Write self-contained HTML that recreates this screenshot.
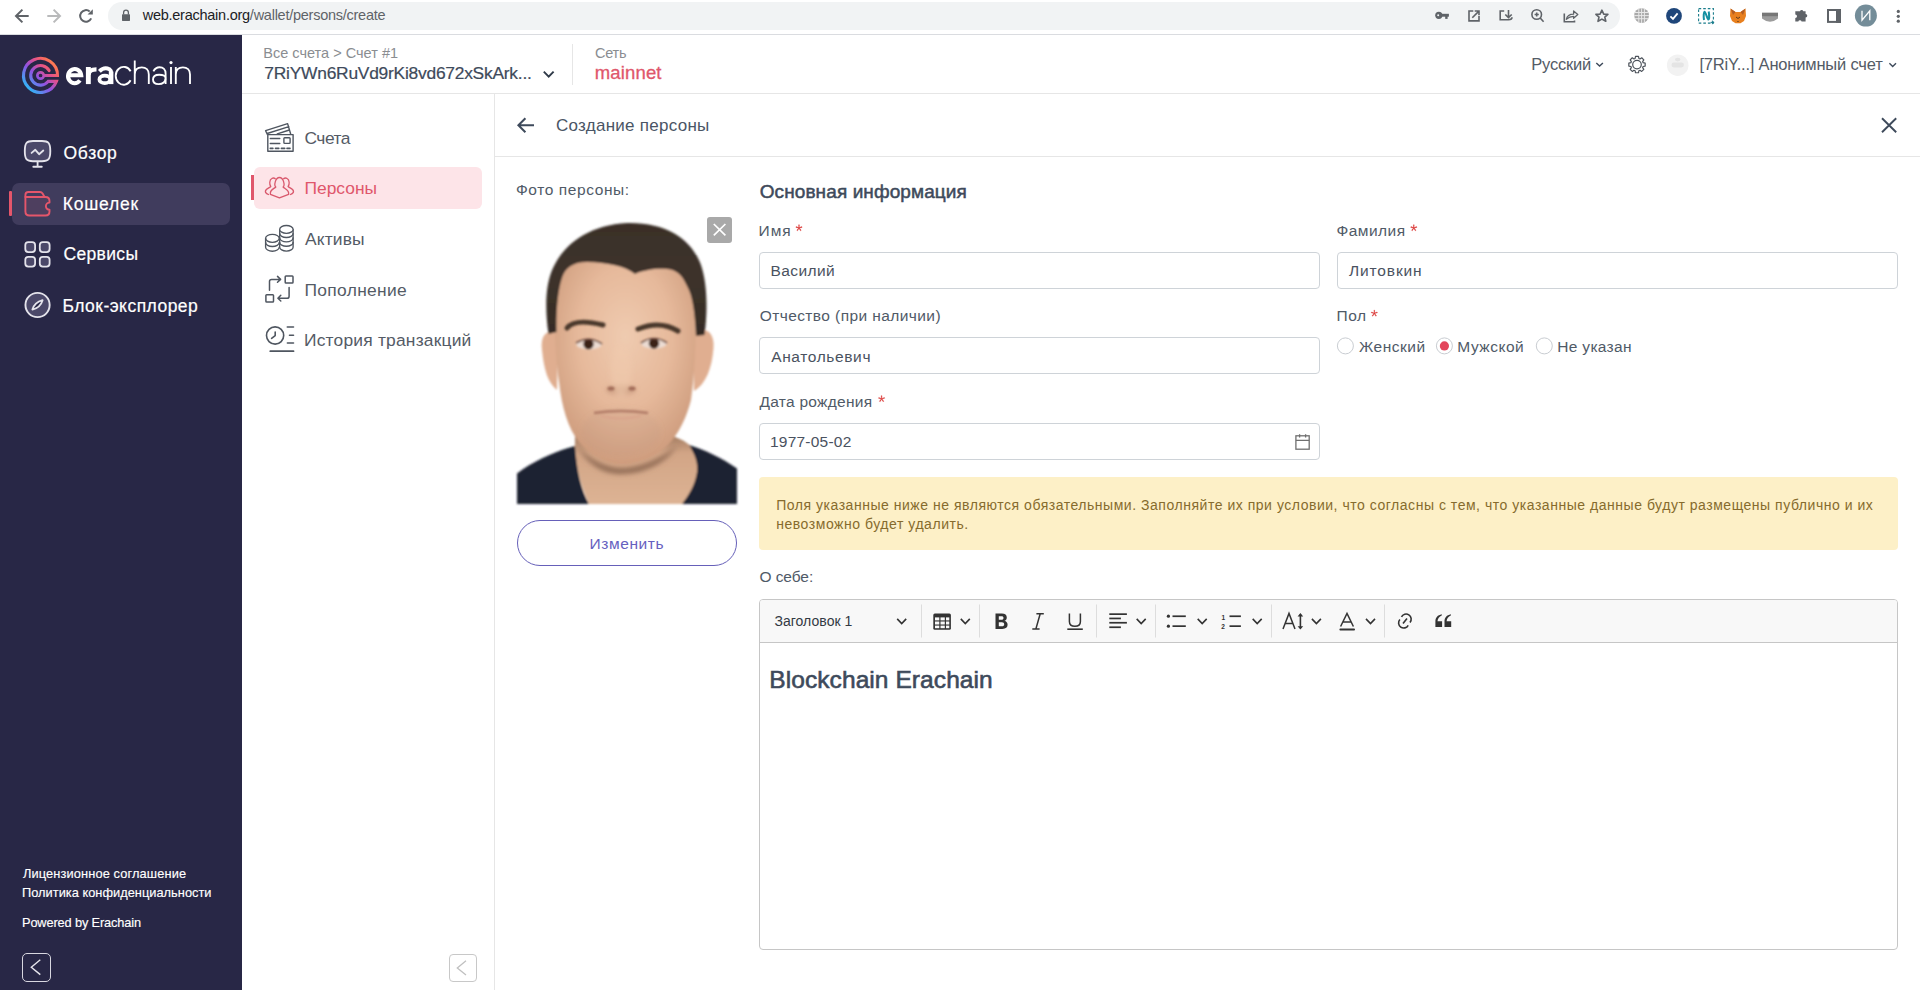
<!DOCTYPE html>
<html lang="ru"><head><meta charset="utf-8"><title>Erachain</title>
<style>
html,body{margin:0;padding:0;width:1920px;height:990px;overflow:hidden;background:#fff;position:relative;font-family:"Liberation Sans",sans-serif}
.a{position:absolute;box-sizing:border-box}
.t{position:absolute;white-space:pre;line-height:1;font-family:"Liberation Sans",sans-serif}
svg.a{overflow:visible}
</style></head><body>
<!-- browser chrome -->
<div class="a" style="left:0;top:0;width:1920px;height:34px;background:#fff"></div>
<div class="a" style="left:0;top:34px;width:1920px;height:1px;background:#dadce0"></div>
<div class="a" style="left:108px;top:2px;width:1512px;height:28px;border-radius:14px;background:#f1f3f4"></div>
<!-- sidebar -->
<div class="a" style="left:0;top:35px;width:242px;height:955px;background:#282746"></div>
<div class="a" style="left:12px;top:183px;width:218px;height:42px;border-radius:7px;background:#403c5d"></div>
<div class="a" style="left:9px;top:191px;width:3px;height:25px;background:#e5566b;border-radius:1px"></div>
<!-- header -->
<div class="a" style="left:242px;top:93px;width:1678px;height:1px;background:#e6e6e6"></div>
<div class="a" style="left:572px;top:44px;width:1px;height:41px;background:#e6e6e6"></div>
<!-- sub sidebar -->
<div class="a" style="left:494px;top:94px;width:1px;height:896px;background:#e6e6e6"></div>
<div class="a" style="left:254px;top:167px;width:228px;height:42px;border-radius:6px;background:#fde4e8"></div>
<div class="a" style="left:251px;top:175px;width:3px;height:25px;background:#e0566b"></div>
<!-- content header -->
<div class="a" style="left:495px;top:156px;width:1425px;height:1px;background:#e6e6e6"></div>
<!-- inputs -->
<div class="a" style="left:759px;top:252px;width:561px;height:37px;border:1px solid #ced3d8;border-radius:4px"></div>
<div class="a" style="left:1337px;top:252px;width:561px;height:37px;border:1px solid #ced3d8;border-radius:4px"></div>
<div class="a" style="left:759px;top:337px;width:561px;height:37px;border:1px solid #ced3d8;border-radius:4px"></div>
<div class="a" style="left:759px;top:423px;width:561px;height:37px;border:1px solid #ced3d8;border-radius:4px"></div>
<!-- warning -->
<div class="a" style="left:759px;top:477px;width:1139px;height:73px;border-radius:4px;background:#fdf0c7"></div>
<!-- editor -->
<div class="a" style="left:759px;top:599px;width:1139px;height:351px;border:1px solid #c6c6c6;border-radius:4px;background:#fff"></div>
<div class="a" style="left:760px;top:600px;width:1137px;height:42px;background:#f8f8f8;border-radius:3px 3px 0 0"></div>
<div class="a" style="left:760px;top:642px;width:1137px;height:1px;background:#c6c6c6"></div>
<!-- button -->
<div class="a" style="left:517px;top:520px;width:220px;height:46px;border:1px solid #6660b9;border-radius:23px"></div>

<!-- photo -->
<svg class="a" style="left:517px;top:210px" width="220" height="294" viewBox="0 0 220 294">
<defs>
<radialGradient id="fg" cx="0.5" cy="0.4" r="0.6">
<stop offset="0" stop-color="#efcbb0"/><stop offset="0.55" stop-color="#e6b99b"/><stop offset="1" stop-color="#cf9d7e"/></radialGradient>
<linearGradient id="ng" x1="0" y1="0" x2="0" y2="1"><stop offset="0" stop-color="#a47d62"/><stop offset="0.25" stop-color="#d2a586"/><stop offset="1" stop-color="#ddb394"/></linearGradient>
<linearGradient id="hg" x1="0" y1="0" x2="0" y2="1"><stop offset="0" stop-color="#3a2f28"/><stop offset="0.5" stop-color="#3d332b"/><stop offset="1" stop-color="#352b24"/></linearGradient>
<filter id="bl" x="-20%" y="-20%" width="140%" height="140%"><feGaussianBlur stdDeviation="0.8"/></filter>
<filter id="bl2" x="-50%" y="-50%" width="200%" height="200%"><feGaussianBlur stdDeviation="2.5"/></filter>
</defs>
<g filter="url(#bl)">
<path d="M58 226 C57 250 62 272 72 294 L174 294 C180 276 184 262 181 246 C177 238 170 231 158 227 Z" fill="url(#ng)"/>
<path d="M0 263.5 C15 252 35 243 51 238 L58 236 C60 262 64 280 72 294 L0 294 Z" fill="#1b2230"/>
<path d="M220 258.5 C205 248 188 240 172 235 C178 245 181 252 180 262 C178 275 172 285 165 294 L220 294 Z" fill="#1b2230"/>
<path d="M41 124 C31 118 23 124 25 140 C27 160 31 173 40 180 Z" fill="#e0ae90"/>
<path d="M176 121 C187 116 198 121 196.5 138 C195 158 189 174 177 181 Z" fill="#e0ae90"/>
<path d="M40 72 C40 55 62 42 104 42 C150 42 176 55 178 72 C180 120 178 165 174 190 C170 206 162 224 150 236 C138 247 120 254.5 104 254.5 C91 254.5 74 246 62 232 C51 218 45 198 42 172 C38 140 36 100 40 72 Z" fill="url(#fg)"/>
<path d="M31.5 124 C28 100 28 75 36 58 C46 36 70 15 110 13 C150 12 175 30 184 55 C190 72 191 100 187.5 125 L179 126 C178 105 176 86 170 76 C165 65 160 60 150 59 C140 58 126 60 118 64 C108 56 90 52.5 70 52 C56 52 48 58 45 68 C41 80 39 100 39.5 122 Z" fill="url(#hg)"/>
</g>
<g filter="url(#bl2)">
<path d="M60 236 C75 252 92 258 104 258 C122 258 142 250 160 236 C150 252 128 264 104 264 C86 264 70 254 60 236 Z" fill="#8a6550" opacity="0.9"/>
<ellipse cx="104" cy="222" rx="40" ry="24" fill="#b3927d" opacity="0.15"/>
<ellipse cx="104" cy="180" rx="15" ry="5" fill="#b07c62" opacity="0.45"/>
<ellipse cx="104" cy="160" rx="10" ry="26" fill="#f0c9ad" opacity="0.6"/>
</g>
<g filter="url(#bl)">
<path d="M50 118 Q58 108 86 115" fill="none" stroke="#4a372b" stroke-width="5" stroke-linecap="round"/>
<path d="M121 119 Q143 110 161 121" fill="none" stroke="#4a372b" stroke-width="5" stroke-linecap="round"/>
<ellipse cx="72" cy="134.5" rx="12.5" ry="5" fill="#ecdcd3"/>
<ellipse cx="137" cy="133.8" rx="12.5" ry="5" fill="#ecdcd3"/>
<circle cx="71.5" cy="134" r="5.2" fill="#3a2016"/>
<circle cx="137" cy="133.3" r="5.2" fill="#3a2016"/>
<path d="M59 133 Q72 125 85 134" fill="none" stroke="#6e4a3c" stroke-width="1.6"/>
<path d="M124 133 Q137 124 150 133" fill="none" stroke="#6e4a3c" stroke-width="1.6"/>
<ellipse cx="94" cy="178.5" rx="3.5" ry="2" fill="#a06b56"/>
<ellipse cx="115" cy="178.5" rx="3.5" ry="2" fill="#a06b56"/>
<path d="M77 203 Q104 199 131 203" fill="none" stroke="#b07a66" stroke-width="2.4"/>
<path d="M84 206 Q104 211 124 206" fill="none" stroke="#d9a48c" stroke-width="2"/>
</g>
</svg>
<!-- photo close -->
<div class="a" style="left:707px;top:217px;width:25px;height:25.5px;border-radius:3px;background:#a9a9a9"></div>
<svg class="a" style="left:707px;top:217px" width="25" height="26" viewBox="0 0 25 26"><path d="M6.8 7 L18.4 18.4 M18.4 7 L6.8 18.4" stroke="#fff" stroke-width="1.7"/></svg>
<!-- logo -->
<svg class="a" style="left:0;top:0" width="242" height="120" viewBox="0 0 242 120">
<defs><linearGradient id="lg" gradientUnits="userSpaceOnUse" x1="27" y1="89" x2="54" y2="62">
<stop offset="0" stop-color="#2dbaf7"/><stop offset="0.42" stop-color="#8f52e3"/><stop offset="0.68" stop-color="#e0508f"/><stop offset="0.88" stop-color="#fa6a5c"/><stop offset="1" stop-color="#ff8250"/></linearGradient></defs>
<g fill="none" stroke="url(#lg)" stroke-width="3.1" stroke-linecap="round">
<path d="M44.8 75.5 L57.5 75.5 A17 17 0 1 0 56.4 81.4 L48.2 81.4 A9.8 9.8 0 1 1 49.1 70.6"/>
<circle cx="40.56" cy="75.5" r="3.2" stroke-width="2.7"/>
</g>
</svg>
<!-- sidebar icons -->
<svg class="a" style="left:0;top:130px" width="60" height="200" viewBox="0 130 60 200">
<g fill="none" stroke="#e4e3eb" stroke-width="1.85" stroke-linecap="round" stroke-linejoin="round">
<path d="M33 141 H42 C48.5 141 50.3 143 50.3 151 C50.3 159.2 48.5 161.2 42 161.2 H33 C26.5 161.2 24.8 159.2 24.8 151 C24.8 143 26.5 141 33 141 Z" fill="#4b4869"/>
<path d="M31.6 152.9 L35.3 149.8 L39.1 154.2 L43.3 150.5"/>
<path d="M37.6 162 V166.5 M33.3 166.7 H41.8"/>
<g stroke="#e5566b" stroke-width="1.9" fill="#4e3f5f">
<path d="M25.4 197 V211.5 Q25.4 215.5 29.4 215.5 H45.5 Q49.5 215.5 49.5 211.5 V209.8 A3.6 3.6 0 0 1 49.5 202.6 V201 Q49.5 197 45.5 197 Z"/>
<path d="M25.4 197 V195 Q25.4 192 28.4 192 H40 Q41.6 192 42.6 193.6 L44.6 197" fill="none"/>
</g>
<g fill="#4b4869" stroke-width="1.8">
<rect x="25.3" y="242.1" width="9.8" height="10" rx="3"/>
<rect x="39.8" y="242.1" width="9.8" height="10" rx="3"/>
<rect x="25.3" y="256.8" width="9.8" height="9.8" rx="3"/>
<rect x="39.8" y="256.8" width="9.8" height="9.8" rx="3"/>
<circle cx="37.55" cy="305" r="12.1" stroke-width="1.9"/>
</g>
<path d="M32.4 309.6 Q34.5 302.5 42.6 300.2 Q40.5 307.5 32.4 309.6 Z" stroke-width="1.8" fill="#282746"/>
</g>
</svg>
<!-- sub sidebar icons -->
<svg class="a" style="left:255px;top:115px" width="50" height="245" viewBox="255 115 50 245">
<g fill="none" stroke="#4f5660" stroke-width="1.4" stroke-linecap="round" stroke-linejoin="round">
<path d="M267.5 134.6 L265.6 130.6 L287.6 123.6 L290.6 133.8 M267.2 133.5 L288.9 126.7 M277.3 133.8 L289.4 130"/>
<rect x="267.8" y="134.6" width="25.3" height="16.6" fill="#fff"/>
<path d="M270.3 138.5 H279.8 M270.3 143.5 H279.8"/>
<rect x="283.9" y="137.8" width="6.2" height="5.6" rx="0.8"/>
<path d="M270.3 148.4 H272.9 M275.5 148.4 H278.8 M281.4 148.4 H284.7 M287 148.4 H290" stroke-width="1.6"/>
<!-- coins -->
<g stroke-width="1.35">
<path d="M279.7 229.4 V247.2 A6.7 3.9 0 0 0 293.1 247.2 V229.4"/>
<ellipse cx="286.4" cy="229.4" rx="6.7" ry="3.9" fill="#fff"/>
<path d="M279.7 233.6 A6.7 3.9 0 0 0 293.1 233.6 M279.7 238 A6.7 3.9 0 0 0 293.1 238 M279.7 242.4 A6.7 3.9 0 0 0 293.1 242.4"/>
<path d="M265.6 238.3 V247.2 A6.8 4 0 0 0 279.2 247.2"/>
<ellipse cx="272.4" cy="238.3" rx="6.8" ry="4"/>
<path d="M265.6 242.5 A6.8 4 0 0 0 279.2 242.5"/>
</g>
<!-- topup -->
<g stroke-width="1.5">
<rect x="285.2" y="275.9" width="7.8" height="7.2" rx="0.8"/>
<rect x="265.9" y="294.8" width="7.6" height="7.2" rx="0.8"/>
<path d="M269.5 290.3 V281.5 Q269.5 279.4 271.6 279.4 H280.5 M277.5 276.4 L280.6 279.4 L277.5 282.3"/>
<path d="M289.1 287.4 V296.2 Q289.1 298.3 287 298.3 H278 M280.8 295.3 L277.9 298.3 L280.8 301"/>
</g>
<!-- history -->
<g stroke-width="1.6">
<circle cx="275.1" cy="335.5" r="8.6"/>
<path d="M275.2 332 V335.6 L271.6 338.3"/>
<path d="M287.3 327 H293.5 M289.5 335.2 H293.5 M287.4 343 H293.5"/>
<path d="M270.3 351.2 H293.5" stroke-width="1.8"/>
</g>
</g>
<g fill="none" stroke="#d9596d" stroke-width="1.3" stroke-linejoin="round" stroke-linecap="round">
<path d="M275.8 187 C273.8 185.5 275.3 177.5 279.45 177.5 C283.6 177.5 285.1 185.5 283.1 187 C284.5 188.6 288.6 189.5 288.6 192.8 V194.3 L279.45 197.8 L270.4 194.3 V192.8 C270.4 189.5 274.4 188.6 275.8 187 Z"/>
<path d="M275.2 178.6 C274 177.8 272.7 178 271.8 178.5 C269.3 179.7 269.2 184.8 270.8 186.5 C269.3 188 265.4 188.6 265.4 191.5 C265.4 193.2 267 194 268.5 194.5"/>
<path d="M283.7 178.6 C284.9 177.8 286.2 178 287.1 178.5 C289.6 179.7 289.7 184.8 288.1 186.5 C289.6 188 293.5 188.6 293.5 191.5 C293.5 193.2 291.9 194 290.4 194.5"/>
</g>
</svg>
<!-- logo text -->
<svg class="a" style="left:60px;top:55px" width="140" height="35" viewBox="60 55 140 35">
<g fill="none" stroke="#fff" stroke-linecap="butt">
<path d="M68.2 75.3 H81.2 A6.6 7.1 0 1 0 79.9 80.4" stroke-width="4.1"/>
<path d="M88.35 67 V84.1" stroke-width="4.9"/>
<path d="M88.4 75 Q88.6 69.4 96.5 69.4" stroke-width="4.4"/>
<path d="M111.1 71.5 V84.1" stroke-width="4.6"/>
<path d="M99.4 71.4 Q104 66.6 109.4 69.2 Q111.1 70.3 111.1 73" stroke-width="3.9"/>
<ellipse cx="104.8" cy="79.4" rx="5.4" ry="3.7" stroke-width="3.8"/>
<g stroke-width="1.85">
<path d="M130.6 71.3 A8 8.9 0 1 0 130.6 80.3"/>
<path d="M134.75 60.6 V83.9 M134.75 74.5 C134.75 70 137.5 67.3 141.8 67.3 C146 67.3 148.8 70 148.8 74.5 V83.9"/>
<path d="M153.4 71.3 C154.8 68.5 157 67.2 159.6 67.2 C163.2 67.2 165.6 69.8 165.6 73.5 V83.9"/>
<path d="M165.6 77.6 C165.2 75.6 162.4 74.7 159.2 74.7 C155.3 74.7 153 76.7 153 79.5 C153 82.3 155.3 84.1 158.8 84.1 C162.8 84.1 165.6 81.6 165.6 78.4"/>
<path d="M171 67 V83.9"/>
<path d="M175.8 67 V83.9 M175.8 74.5 C175.8 70 178.6 67.3 182.9 67.3 C187.2 67.3 190 70 190 74.5 V83.9"/>
</g>
</g>
<circle cx="171" cy="62.6" r="1.6" fill="#fff"/>
</svg>
<!-- browser icons -->
<svg class="a" style="left:0;top:0" width="140" height="34" viewBox="0 0 140 34">
<g fill="none" stroke-width="2" stroke-linecap="butt" stroke-linejoin="miter">
<path d="M28.7 16 H16.5 M22.4 9.6 L16 16 L22.4 22.4" stroke="#5f6368"/>
<path d="M47.3 16 H59.5 M53.6 9.6 L60 16 L53.6 22.4" stroke="#b9babb"/>
<path d="M91.2 18.4 A5.8 5.8 0 1 1 89.7 11.5" stroke="#5f6368"/>
</g>
<polygon points="87.6,14.4 92.8,14.4 92.8,9.2" fill="#5f6368"/>
<rect x="122" y="14.3" width="8" height="6.6" rx="0.6" fill="#5f6368"/>
<path d="M123.6 14.5 V12.6 A2.4 2.4 0 0 1 128.4 12.6 V14.5" fill="none" stroke="#5f6368" stroke-width="1.3"/>
</svg>
<svg class="a" style="left:1420px;top:0" width="500" height="34" viewBox="1420 0 500 34">
<g fill="#5f6368" stroke="none">
<circle cx="1438.8" cy="15.3" r="3.6"/>
<rect x="1441" y="13.8" width="7.9" height="2.9"/>
<rect x="1445.2" y="15" width="2.4" height="3.9"/>
</g>
<circle cx="1438.2" cy="15.3" r="1" fill="#f1f3f4"/>
<g fill="none" stroke="#5f6368" stroke-width="1.6">
<path d="M1473.3 11 H1469 V20.9 H1479 V16"/>
<path d="M1472.3 17.7 L1478.9 11.1 M1474.7 11 H1479 V15.2"/>
<path d="M1504.2 11 H1500.2 V19.7 H1508.5 Q1512 19.7 1512 17.3"/>
<path d="M1508.5 10 V17.5 M1505.3 14.5 L1508.5 17.6 L1511.7 14.5"/>
<circle cx="1536.7" cy="14.5" r="4.8"/>
<path d="M1534.6 14.5 H1538.8 M1536.7 12.4 V16.6 M1540.2 18 L1543.6 21.7"/>
<path d="M1564.3 13.4 V21.7 H1574.5 V20.4"/>
<path d="M1566.3 19.3 C1567 16 1569.5 14.2 1573.6 14.2 V11 L1577.8 14.6 L1573.6 18.3 V16.3 C1570.5 16.3 1568.5 17.3 1566.3 19.3 Z" stroke-width="1.3" stroke-linejoin="round"/>
<path d="M1601.9 10.2 L1603.7 14.1 L1607.9 14.4 L1604.8 17.1 L1605.8 21.3 L1601.9 19.1 L1598 21.3 L1599 17.1 L1595.9 14.4 L1600.1 14.1 Z" stroke-linejoin="round"/>
</g>
<!-- extensions -->
<circle cx="1641.6" cy="15.6" r="7.4" fill="#a9a9a9"/>
<g stroke="#e8e8e8" stroke-width="1" fill="none">
<path d="M1634.5 12.5 H1648.7 M1634.2 15.6 H1649 M1634.5 18.7 H1648.7 M1638.8 8.5 V22.7 M1641.6 8.2 V23 M1644.4 8.5 V22.7"/>
</g>
<circle cx="1674" cy="15.9" r="7.9" fill="#1f467a"/>
<path d="M1670.4 16.3 L1673 18.9 L1677.6 13.4" fill="none" stroke="#fff" stroke-width="1.8"/>
<rect x="1698.6" y="8.6" width="14.8" height="14.5" fill="none" stroke="#1b7d8c" stroke-width="1.1" stroke-dasharray="2.6 2"/>
<path d="M1704 20 C1703.3 16 1703.8 12 1704.6 11.8 C1705.6 11.6 1707.5 19.8 1708.4 19.6 C1709.2 19.4 1709.4 15.5 1708.7 11.5" fill="none" stroke="#1690a2" stroke-width="2"/>
<path d="M1712.4 20.6 V24.2 M1710.6 22.4 H1714.2" stroke="#1b7d8c" stroke-width="1"/>
<path d="M1730.5 8.6 L1735.5 12 H1740.5 L1745.5 8.6 L1746 16 L1744 21 L1740.5 23.3 H1735.5 L1732 21 L1730 16 Z" fill="#e8801f"/>
<path d="M1730.5 8.6 L1735.5 12 L1733 15 Z M1745.5 8.6 L1740.5 12 L1743 15 Z" fill="#b55d22"/>
<path d="M1736 17 L1738 18.5 L1740 17 M1737.4 21.5 H1738.6" stroke="#5a3a20" stroke-width="1" fill="none"/>
<path d="M1762 12.8 H1778 V18.5 Q1770 25 1762 18.5 Z" fill="#9c9c9c"/>
<rect x="1762" y="12.8" width="16" height="3.4" fill="#777"/>
<path d="M1797.8 11.2 H1800 A1.7 1.7 0 0 1 1803.3 11.2 H1805.6 V14 A1.7 1.7 0 0 1 1805.6 17.4 V21.5 H1801.6 A1.7 1.7 0 0 0 1798.3 21.5 H1795.3 V18 A1.7 1.7 0 0 0 1795.3 14.6 V11.2 Z" fill="#5f6368"/>
<rect x="1828" y="10" width="12" height="11.9" fill="none" stroke="#5f6368" stroke-width="2"/>
<rect x="1836" y="9" width="5" height="13.9" fill="#5f6368"/>
<circle cx="1865.9" cy="15.6" r="11" fill="#748d99"/>
<path d="M1862 10.8 V20.2 L1869.8 10.8 V20.2" fill="none" stroke="#fff" stroke-width="1.3"/>
<circle cx="1898.3" cy="11.4" r="1.6" fill="#5f6368"/><circle cx="1898.3" cy="16.3" r="1.6" fill="#5f6368"/><circle cx="1898.3" cy="21.2" r="1.6" fill="#5f6368"/>
</svg>
<!-- header icons -->
<svg class="a" style="left:520px;top:40px" width="1400" height="120" viewBox="520 40 1400 120">
<path d="M543.8 71.6 L548.7 76.6 L553.6 71.6" fill="none" stroke="#2f3a48" stroke-width="1.9"/>
<path d="M1596.3 62.9 L1599.6 66.1 L1602.9 62.9" fill="none" stroke="#3e4a5b" stroke-width="1.4"/>
<path d="M1889.4 63.3 L1892.7 66.5 L1896 63.3" fill="none" stroke="#3e4a5b" stroke-width="1.4"/>
<g fill="none" stroke="#4d535b" stroke-width="1.2">
<path d="M1643.11 62.71 L1645.17 63.11 L1645.17 66.09 L1643.11 66.49 L1642.66 67.59 L1643.82 69.32 L1641.72 71.42 L1639.99 70.26 L1638.89 70.71 L1638.49 72.77 L1635.51 72.77 L1635.11 70.71 L1634.01 70.26 L1632.28 71.42 L1630.18 69.32 L1631.34 67.59 L1630.89 66.49 L1628.83 66.09 L1628.83 63.11 L1630.89 62.71 L1631.34 61.61 L1630.18 59.88 L1632.28 57.78 L1634.01 58.94 L1635.11 58.49 L1635.51 56.43 L1638.49 56.43 L1638.89 58.49 L1639.99 58.94 L1641.72 57.78 L1643.82 59.88 L1642.66 61.61 Z" stroke-linejoin="round"/>
<circle cx="1637" cy="64.6" r="4.3"/>
</g>
<circle cx="1677.7" cy="65.2" r="10.8" fill="#f2f2f2"/>
<ellipse cx="1677.7" cy="59.6" rx="2.8" ry="1.8" fill="#e4e4e4"/>
<rect x="1671.5" y="62.6" width="12.4" height="4.8" rx="2.4" fill="#e4e4e4"/>
<!-- back + close -->
<path d="M534 125.2 H518.6 M525.4 118.2 L518.4 125.2 L525.4 132.2" fill="none" stroke="#3e4a5b" stroke-width="2"/>
<path d="M1882 118.3 L1896.2 132.3 M1896.2 118.3 L1882 132.3" fill="none" stroke="#3e4a5b" stroke-width="1.9"/>
</svg>
<!-- asterisks -->
<svg class="a" style="left:750px;top:215px" width="700" height="200" viewBox="750 215 700 200">
<g fill="#d9302f" stroke="#d9302f" stroke-width="0.35">
<path d="M798.6 224.8 L799.4 224.8 L799.2 227.6 L801.8 226.6 L802.1 227.4 L799.4 228.1 L801.2 230.3 L800.5 230.8 L799 228.4 L797.5 230.8 L796.8 230.3 L798.6 228.1 L795.9 227.4 L796.2 226.6 L798.8 227.6 Z"/>
<path transform="translate(614.8 0)" d="M798.6 224.8 L799.4 224.8 L799.2 227.6 L801.8 226.6 L802.1 227.4 L799.4 228.1 L801.2 230.3 L800.5 230.8 L799 228.4 L797.5 230.8 L796.8 230.3 L798.6 228.1 L795.9 227.4 L796.2 226.6 L798.8 227.6 Z"/>
<path transform="translate(575.3 85.4)" d="M798.6 224.8 L799.4 224.8 L799.2 227.6 L801.8 226.6 L802.1 227.4 L799.4 228.1 L801.2 230.3 L800.5 230.8 L799 228.4 L797.5 230.8 L796.8 230.3 L798.6 228.1 L795.9 227.4 L796.2 226.6 L798.8 227.6 Z"/>
<path transform="translate(82.6 170.9)" d="M798.6 224.8 L799.4 224.8 L799.2 227.6 L801.8 226.6 L802.1 227.4 L799.4 228.1 L801.2 230.3 L800.5 230.8 L799 228.4 L797.5 230.8 L796.8 230.3 L798.6 228.1 L795.9 227.4 L796.2 226.6 L798.8 227.6 Z"/>
</g>
</svg>
<!-- radios -->
<svg class="a" style="left:1330px;top:330px" width="240" height="30" viewBox="1330 330 240 30">
<g fill="#fff" stroke="#c9cdd2" stroke-width="1">
<circle cx="1345.4" cy="345.9" r="8"/>
<circle cx="1444.4" cy="345.9" r="8"/>
<circle cx="1544.3" cy="345.9" r="8"/>
</g>
<circle cx="1444.4" cy="345.9" r="4.6" fill="#e3455b"/>
</svg>
<!-- calendar -->
<svg class="a" style="left:1290px;top:430px" width="25" height="25" viewBox="1290 430 25 25">
<g fill="none" stroke="#6f6f6f" stroke-width="1.3">
<rect x="1295.9" y="435.8" width="13.3" height="13.4"/>
<path d="M1295.9 440.4 H1309.2 M1299.6 434.2 V437.4 M1305.6 434.2 V437.4"/>
</g>
</svg>
<!-- collapse buttons -->
<div class="a" style="left:22px;top:953px;width:29px;height:29px;border:1.5px solid #d8d7e0;border-radius:5px"></div>
<svg class="a" style="left:22px;top:953px" width="29" height="29" viewBox="0 0 29 29"><path d="M18.3 6.8 L9.3 14.2 L18.3 21.6" fill="none" stroke="#e6e5ec" stroke-width="1.4"/></svg>
<div class="a" style="left:449px;top:954px;width:28px;height:28px;border:1.5px solid #c8c8c8;border-radius:4px"></div>
<svg class="a" style="left:449px;top:954px" width="28" height="28" viewBox="0 0 28 28"><path d="M17 6.8 L8.3 13.9 L17 21" fill="none" stroke="#c0c0c0" stroke-width="1.3"/></svg>
<!-- toolbar -->
<svg class="a" style="left:760px;top:600px" width="720" height="42" viewBox="760 600 720 42">
<g fill="none" stroke="#dddddd" stroke-width="1">
<path d="M921.5 604.5 V637.5 M979.5 604.5 V637.5 M1096.5 604.5 V637.5 M1155.5 604.5 V637.5 M1271.5 604.5 V637.5 M1384.5 604.5 V637.5"/>
</g>
<g fill="none" stroke="#333" stroke-width="1.6" stroke-linecap="butt">
<path d="M897.2 618.9 L901.7 623.5 L906.2 618.9"/>
<path d="M960.8 618.9 L965.3 623.5 L969.8 618.9"/>
<path d="M1136.7 618.9 L1141.2 623.5 L1145.7 618.9"/>
<path d="M1197.7 618.9 L1202.2 623.5 L1206.7 618.9"/>
<path d="M1252.7 618.9 L1257.2 623.5 L1261.7 618.9"/>
<path d="M1311.9 618.9 L1316.4 623.5 L1320.9 618.9"/>
<path d="M1366 618.9 L1370.5 623.5 L1375 618.9"/>
</g>
<!-- table -->
<rect x="933.3" y="613.4" width="17.6" height="16.4" rx="1.5" fill="#333"/>
<g fill="#f8f8f8">
<rect x="935" y="617.4" width="4.3" height="3"/><rect x="940.5" y="617.4" width="4.3" height="3"/><rect x="946" y="617.4" width="3.3" height="3"/>
<rect x="935" y="621.5" width="4.3" height="3"/><rect x="940.5" y="621.5" width="4.3" height="3"/><rect x="946" y="621.5" width="3.3" height="3"/>
<rect x="935" y="625.6" width="4.3" height="2.6"/><rect x="940.5" y="625.6" width="4.3" height="2.6"/><rect x="946" y="625.6" width="3.3" height="2.6"/>
</g>
<!-- bold B -->
<path d="M995.5 613.6 H1001.8 C1005.2 613.6 1006.8 615.2 1006.8 617.4 C1006.8 619.2 1005.8 620.3 1004.4 620.8 C1006.3 621.3 1007.6 622.7 1007.6 624.8 C1007.6 627.2 1005.9 628.9 1002.3 628.9 H995.5 Z M998.8 616.2 V619.7 H1001.5 C1002.8 619.7 1003.5 619.1 1003.5 617.9 C1003.5 616.8 1002.8 616.2 1001.5 616.2 Z M998.8 622.2 V626.3 H1001.9 C1003.4 626.3 1004.2 625.6 1004.2 624.2 C1004.2 622.9 1003.4 622.2 1001.9 622.2 Z" fill="#333"/>
<!-- italic I -->
<path d="M1036.4 613.8 H1043.8 M1032.3 628.9 H1039.6 M1040.2 613.8 L1035.9 628.9" fill="none" stroke="#333" stroke-width="1.5"/>
<!-- underline U -->
<path d="M1069.4 613.4 V621.5 C1069.4 624.8 1071.4 626.3 1074.9 626.3 C1078.4 626.3 1080.4 624.8 1080.4 621.5 V613.4" fill="none" stroke="#333" stroke-width="1.5"/>
<rect x="1067.3" y="628.4" width="15.5" height="1.6" fill="#333"/>
<!-- align -->
<g fill="#333"><rect x="1109.3" y="613.3" width="17.6" height="1.7"/><rect x="1109.3" y="617.6" width="11.6" height="1.7"/><rect x="1109.3" y="621.9" width="17.6" height="1.7"/><rect x="1109.3" y="626.4" width="11.6" height="1.7"/></g>
<!-- bullet list -->
<g fill="#333"><circle cx="1168.4" cy="616.2" r="1.6"/><circle cx="1168.4" cy="626.2" r="1.6"/><rect x="1172.5" y="615.4" width="13.3" height="1.7"/><rect x="1172.5" y="625.3" width="13.3" height="1.7"/></g>
<!-- numbered list -->
<g fill="#333"><rect x="1229.5" y="615.4" width="11.4" height="1.7"/><rect x="1229.5" y="625.3" width="11.4" height="1.7"/></g>
<text x="1221.6" y="619.6" font-family="Liberation Sans" font-weight="700" font-size="6.5" fill="#333">1</text>
<text x="1221.3" y="629.4" font-family="Liberation Sans" font-weight="700" font-size="6.5" fill="#333">2</text>
<!-- AI -->
<path d="M1283 629 L1289 613.4 L1295 629 M1285.2 623.5 H1292.8" fill="none" stroke="#333" stroke-width="1.5"/>
<path d="M1300.4 614.4 V628.2" stroke="#333" stroke-width="1.6"/>
<path d="M1297.6 616.4 L1300.4 613 L1303.2 616.4 Z M1297.6 626.2 L1300.4 629.6 L1303.2 626.2 Z" fill="#333"/>
<!-- A color -->
<path d="M1340.6 626.5 L1347 613.4 L1353.4 626.5 M1342.8 621.9 H1351.2" fill="none" stroke="#333" stroke-width="1.5"/>
<rect x="1339.4" y="628.6" width="15.6" height="1.8" rx="0.9" fill="#333"/>
<!-- link -->
<g fill="none" stroke="#333" stroke-width="1.6" stroke-linecap="butt">
<path d="M1401.5 616.9 A5.1 5.1 0 1 1 1410 622.4"/>
<path d="M1399.9 619.5 A5.1 5.1 0 1 0 1408.2 625.3"/>
<path d="M1403 623.5 L1407 618.4"/>
</g>
<!-- quote -->
<path d="M1435.4 627.1 V621.5 C1435.4 617.5 1437.6 615 1441.8 614.2 L1441.7 615.5 C1439.2 616.4 1437.8 618.4 1437.5 621.3 H1442.1 V627.1 Z M1444.5 627.1 V621.5 C1444.5 617.5 1446.7 615 1450.9 614.2 L1450.8 615.5 C1448.3 616.4 1446.9 618.4 1446.6 621.3 H1451.2 V627.1 Z" fill="#333"/>
</svg>

<div class="t" style="left:142.70px;top:8.48px;font-size:14.5px;color:#5f6368;letter-spacing:-0.254px"><span style="color:#202124">web.erachain.org</span>/wallet/persons/create</div>
<div class="t" style="left:263.30px;top:45.67px;font-size:14.5px;color:#8a8d91;letter-spacing:0.011px">Все счета &gt; Счет #1</div>
<div class="t" style="left:264.30px;top:64.71px;font-size:17.4px;color:#3e4a5b;letter-spacing:-0.241px;-webkit-text-stroke:0.2px #3e4a5b">7RiYWn6RuVd9rKi8vd672xSkArk...</div>
<div class="t" style="left:595.00px;top:45.67px;font-size:14.5px;color:#8a8d91;letter-spacing:-0.267px">Сеть</div>
<div class="t" style="left:594.80px;top:64.18px;font-size:18.5px;color:#e0566b;letter-spacing:0.15px;-webkit-text-stroke:0.3px #e0566b">mainnet</div>
<div class="t" style="left:1531.30px;top:56.18px;font-size:16.5px;color:#545b66;letter-spacing:-0.217px">Русский</div>
<div class="t" style="left:1699.40px;top:56.18px;font-size:16.5px;color:#545b66;letter-spacing:-0.191px">[7RiY...] Анонимный счет</div>
<div class="t" style="left:63.50px;top:145.43px;font-size:17.5px;color:#ffffff;letter-spacing:0.688px;-webkit-text-stroke:0.2px #ffffff">Обзор</div>
<div class="t" style="left:62.75px;top:196.43px;font-size:17.5px;color:#ffffff;letter-spacing:0.792px;-webkit-text-stroke:0.2px #ffffff">Кошелек</div>
<div class="t" style="left:63.50px;top:246.43px;font-size:17.5px;color:#ffffff;letter-spacing:0.333px;-webkit-text-stroke:0.2px #ffffff">Сервисы</div>
<div class="t" style="left:62.50px;top:297.73px;font-size:17.5px;color:#ffffff;letter-spacing:0.462px;-webkit-text-stroke:0.2px #ffffff">Блок-эксплорер</div>
<div class="t" style="left:23.00px;top:867.82px;font-size:12.8px;color:#ffffff;letter-spacing:0.123px;-webkit-text-stroke:0.15px #ffffff">Лицензионное соглашение</div>
<div class="t" style="left:22.00px;top:886.92px;font-size:12.8px;color:#ffffff;letter-spacing:0.027px;-webkit-text-stroke:0.15px #ffffff">Политика конфиденциальности</div>
<div class="t" style="left:22.00px;top:917.12px;font-size:12.8px;color:#ffffff;letter-spacing:-0.144px;-webkit-text-stroke:0.15px #ffffff">Powered by Erachain</div>
<div class="t" style="left:304.50px;top:130.31px;font-size:17.4px;color:#545b66;letter-spacing:-0.5px">Счета</div>
<div class="t" style="left:304.50px;top:180.21px;font-size:17.4px;color:#e0566b;letter-spacing:0.0px">Персоны</div>
<div class="t" style="left:305.00px;top:231.21px;font-size:17.4px;color:#545b66;letter-spacing:0.16px">Активы</div>
<div class="t" style="left:304.50px;top:281.81px;font-size:17.4px;color:#545b66;letter-spacing:0.322px">Пополнение</div>
<div class="t" style="left:304.00px;top:331.81px;font-size:17.4px;color:#545b66;letter-spacing:0.206px">История транзакций</div>
<div class="t" style="left:556.00px;top:116.55px;font-size:17.0px;color:#4a5565;letter-spacing:0.267px">Создание персоны</div>
<div class="t" style="left:516.00px;top:181.82px;font-size:15.5px;color:#505a67;letter-spacing:0.583px">Фото персоны:</div>
<div class="t" style="left:759.70px;top:182.05px;font-size:19.0px;color:#3e4a5b;letter-spacing:0.1px;-webkit-text-stroke:0.5px #3e4a5b">Основная информация</div>
<div class="t" style="left:758.50px;top:222.52px;font-size:15.5px;color:#505a67;letter-spacing:1.0px">Имя</div>
<div class="t" style="left:770.50px;top:262.52px;font-size:15.5px;color:#4a5260;letter-spacing:0.417px">Василий</div>
<div class="t" style="left:1336.50px;top:222.52px;font-size:15.5px;color:#505a67;letter-spacing:0.467px">Фамилия</div>
<div class="t" style="left:1349.00px;top:262.52px;font-size:15.5px;color:#4a5260;letter-spacing:0.857px">Литовкин</div>
<div class="t" style="left:759.70px;top:308.02px;font-size:15.5px;color:#505a67;letter-spacing:0.41px">Отчество (при наличии)</div>
<div class="t" style="left:771.20px;top:348.82px;font-size:15.5px;color:#4a5260;letter-spacing:0.62px">Анатольевич</div>
<div class="t" style="left:1336.50px;top:307.62px;font-size:15.5px;color:#505a67;letter-spacing:0.5px">Пол</div>
<div class="t" style="left:1359.00px;top:339.32px;font-size:15.5px;color:#505a67;letter-spacing:0.5px">Женский</div>
<div class="t" style="left:1457.30px;top:339.32px;font-size:15.5px;color:#505a67;letter-spacing:0.5px">Мужской</div>
<div class="t" style="left:1557.30px;top:339.32px;font-size:15.5px;color:#505a67;letter-spacing:0.312px">Не указан</div>
<div class="t" style="left:759.40px;top:393.52px;font-size:15.5px;color:#505a67;letter-spacing:0.283px">Дата рождения</div>
<div class="t" style="left:770.00px;top:434.32px;font-size:15.5px;color:#4a5260;letter-spacing:0.222px">1977-05-02</div>
<div class="t" style="left:776.20px;top:497.80px;font-size:14.0px;color:#866b2d;letter-spacing:0.528px">Поля указанные ниже не являются обязательными. Заполняйте их при условии, что согласны с тем, что указанные данные будут размещены публично и их</div>
<div class="t" style="left:776.20px;top:516.80px;font-size:14.0px;color:#866b2d;letter-spacing:0.542px">невозможно будет удалить.</div>
<div class="t" style="left:759.50px;top:569.43px;font-size:15.5px;color:#505a67;letter-spacing:-0.083px">О себе:</div>
<div class="t" style="left:774.40px;top:614.10px;font-size:14.0px;color:#333a44;letter-spacing:0.05px">Заголовок 1</div>
<div class="t" style="left:769.30px;top:668.07px;font-size:24.5px;color:#3e4a5b;letter-spacing:0.078px;-webkit-text-stroke:0.6px #3e4a5b">Blockchain Erachain</div>
<div class="t" style="left:589.60px;top:535.58px;font-size:15.5px;color:#6660c0;letter-spacing:0.586px">Изменить</div>
</body></html>
